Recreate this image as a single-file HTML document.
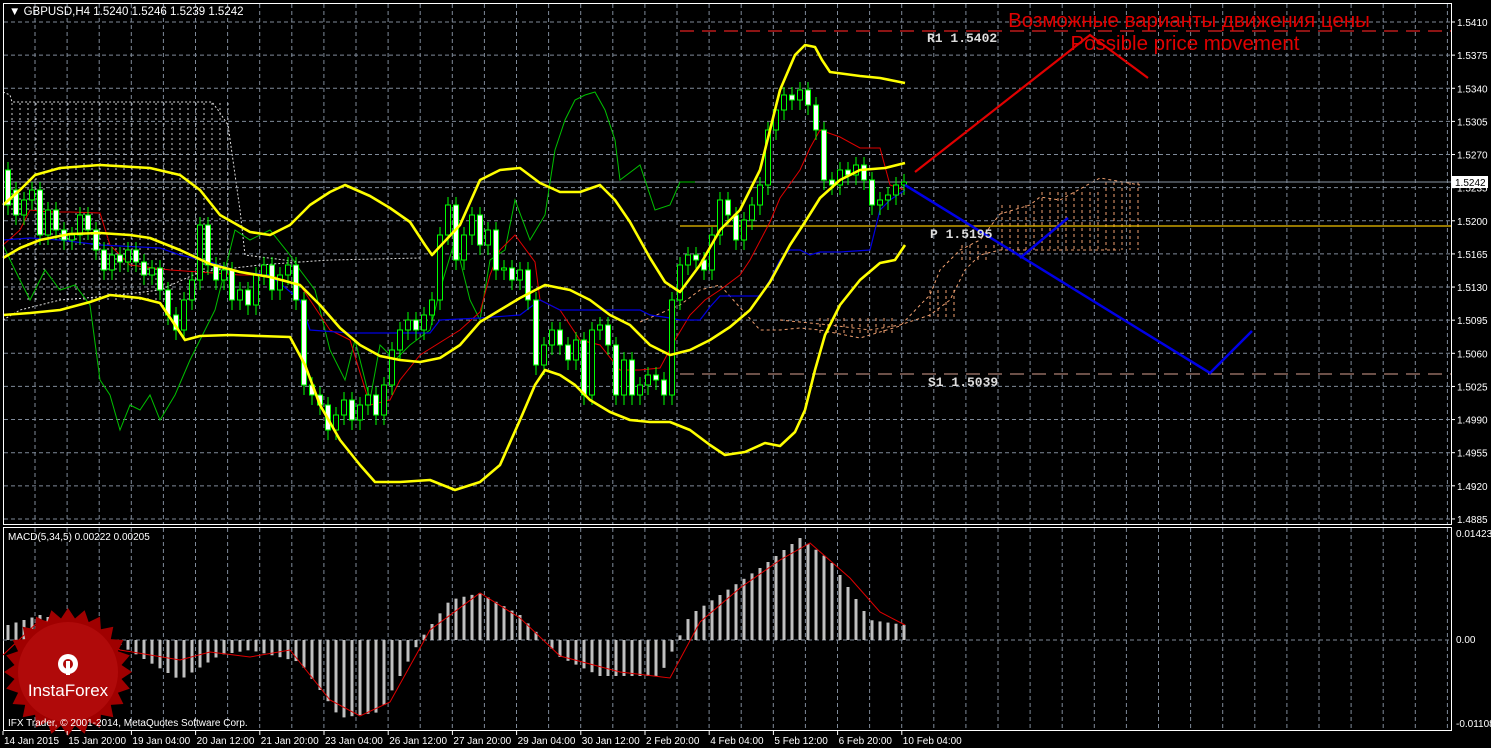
<!DOCTYPE html>
<html><head><meta charset="utf-8"><style>
html,body{margin:0;padding:0;background:#000;width:1491px;height:748px;overflow:hidden}
svg{display:block}
text{font-family:"Liberation Sans",sans-serif}
text.mono{font-family:"Liberation Mono",monospace;font-weight:bold}
</style></head><body>
<svg id="s" width="1491" height="748" xmlns="http://www.w3.org/2000/svg">
<rect width="1491" height="748" fill="#000"/>
<g id="grid" stroke="#7f8a99" stroke-dasharray="4,3" stroke-width="1"></g>
<polyline points="3,92 10,95 12,102 212,102 218,110 228,125 240,210 245,255 300,262 330,260 420,258" fill="none" stroke="#ddd" stroke-dasharray="2,2"/>
<g id="cloudv" stroke="#ccc" stroke-dasharray="2,3"></g>
<polyline points="3,320 20,310 60,300 110,296 160,290 200,272 260,265 300,262" fill="none" stroke="#ddd" stroke-dasharray="2,2"/>
<polyline points="640,322 680,305 700,290 720,285 760,330 780,330 800,328 820,330 860,338 900,326 925,300 930,295 940,270 960,250 980,240 1000,214 1030,205 1040,197 1060,200 1100,178 1140,185" fill="none" stroke="#f0a070" stroke-dasharray="3,3"/>
<polyline points="780,320 830,325 870,330 900,325 930,315 950,300 965,270 980,255 1000,250 1060,250 1120,250" fill="none" stroke="#f0a070" stroke-dasharray="3,3"/>
<g id="ocv" stroke="#f0a070" stroke-dasharray="3,3"></g>
<line x1="3" y1="182" x2="1451" y2="182" stroke="#8a96a3"/>
<line x1="680" y1="31" x2="1451" y2="31" stroke="#e02020" stroke-dasharray="14,8" stroke-width="1.3"/>
<line x1="680" y1="226" x2="1451" y2="226" stroke="#f0c000" stroke-width="1.3"/>
<line x1="680" y1="374" x2="1451" y2="374" stroke="#d8a090" stroke-dasharray="14,8"/>
<polyline points="3,245 15,270 30,300 45,270 60,290 75,285 90,305 100,380 110,395 120,430 130,405 140,410 150,395 160,420 175,395 190,360 200,340 215,310 235,230 250,240 270,230 290,255 300,270 315,290 330,350 345,380 355,340 370,400 380,345 395,360 410,345 430,330 440,290 455,240 470,300 480,320 490,260 505,250 515,200 530,240 545,215 555,150 565,120 575,100 585,95 595,92 605,110 615,140 620,180 640,165 655,210 670,205 680,182 695,182" fill="none" stroke="#00c000"/>
<polyline points="3,245 20,230 30,210 50,212 70,212 100,213 110,245 130,265 170,270 200,272 240,275 270,275 300,285 330,330 350,340 370,405 390,400 400,380 420,355 460,330 480,312 490,275 500,250 515,235 535,262 540,300 560,310 580,340 600,345 620,370 640,370 660,368 675,340 690,315 705,300 720,290 740,275 750,260 770,222 780,198 800,170 810,148 820,130 840,137 860,148 880,148 890,185 905,190" fill="none" stroke="#e00000"/>
<polyline points="3,240 30,238 60,240 100,245 160,248 180,255 210,262 240,272 270,275 300,300 310,330 350,333 430,333 440,320 480,318 520,315 540,300 560,310 600,310 640,310 650,315 670,318 680,320 700,320 710,307 720,296 760,296 770,280 780,260 790,250 800,250 810,255 820,252 840,252 870,250 880,210 890,200 905,190" fill="none" stroke="#0000e0" stroke-width="1.2"/>
<g id="candles"></g>
<g fill="none" stroke="#ffff00" stroke-width="2.6" stroke-linejoin="round">
<polyline points="3,205 20,190 35,175 60,168 100,165 150,168 180,175 200,190 220,215 250,232 270,235 290,225 310,205 330,192 345,185 370,196 390,208 410,222 425,245 432,255 460,225 480,180 500,170 520,168 540,183 560,192 580,192 600,185 615,200 630,222 650,258 665,282 680,292 700,265 720,230 740,210 760,170 770,130 780,90 795,55 805,45 815,47 822,60 830,72 860,76 880,78 905,83"/>
<polyline points="3,258 20,248 40,240 70,234 100,233 130,235 150,238 180,250 210,264 240,272 270,277 300,285 320,305 340,328 360,345 380,356 400,360 420,362 440,358 460,345 480,322 500,310 520,298 545,285 570,290 590,300 610,315 630,325 650,345 670,355 690,350 710,340 730,327 750,310 770,282 790,245 805,222 820,198 840,180 860,170 885,168 905,163"/>
<polyline points="3,315 30,313 60,310 90,302 110,295 140,298 160,303 175,325 185,340 200,336 230,335 260,336 290,337 305,365 320,405 340,440 360,465 375,482 400,482 430,480 455,490 480,482 500,465 520,420 535,385 545,370 560,375 575,385 590,400 610,412 630,420 650,422 670,422 690,430 710,445 725,455 745,452 765,443 780,446 795,432 805,410 815,370 825,335 840,305 860,280 880,263 895,260 905,245"/>
</g>
<polyline points="915,172 1090,35 1148,78" fill="none" stroke="#e00000" stroke-width="2.2"/>
<polyline points="905,185 1210,373 1252,331" fill="none" stroke="#0000e6" stroke-width="2.5"/>
<polyline points="1020,258 1068,218" fill="none" stroke="#0000e6" stroke-width="2.5"/>
<text x="1189" y="27" fill="#e00000" font-size="20.5" text-anchor="middle">Возможные варианты движения цены</text>
<text x="1185" y="50" fill="#e00000" font-size="20.5" text-anchor="middle">Possible price movement</text>
<text class="mono" x="927" y="42" font-size="13" fill="#ddd">R1 1.5402</text>
<text class="mono" x="930" y="238" font-size="13" fill="#ddd">P 1.5195</text>
<text class="mono" x="928" y="386" font-size="13" fill="#ddd">S1 1.5039</text>
<rect x="3.5" y="3.5" width="1448" height="521" fill="none" stroke="#fff"/>
<rect x="3.5" y="527.5" width="1448" height="203" fill="none" stroke="#fff"/>
<line x1="3" y1="640" x2="1451" y2="640" stroke="#7f8a99" stroke-dasharray="4,3"/>
<g id="macd" fill="#c0c0c0"></g>
<polyline id="sig" fill="none" stroke="#e00000" stroke-width="1"/>
<rect x="1452" y="176" width="36" height="12" fill="#fff"/>
<g id="axis" font-size="10" fill="#fff"></g>
<text x="9" y="15" font-size="11.5" fill="#fff">▼ GBPUSD,H4  1.5240 1.5246 1.5239 1.5242</text>
<text x="8" y="540" font-size="10" fill="#fff">MACD(5,34,5) 0.00222 0.00205</text>
<g transform="translate(68,672)">
<polygon id="star" fill="#a00000"/>
<circle r="50" fill="#b00a0a"/>
<g fill="#fff" transform="translate(0,-8)">
<circle r="10"/><circle r="5" fill="#b00a0a"/>
<rect x="-2" y="-3" width="4" height="14"/>
</g>
<text x="0" y="24" font-size="17" fill="#fff" text-anchor="middle">InstaForex</text>
</g>
<text x="8" y="726" font-size="10" fill="#fff">IFX Trader, © 2001-2014, MetaQuotes Software Corp.</text>
<g id="dates" font-size="10" fill="#fff"></g>
</svg>
<script>
(function(){
var NS="http://www.w3.org/2000/svg";
function el(p,t,a){var e=document.createElementNS(NS,t);for(var k in a)e.setAttribute(k,a[k]);p.appendChild(e);return e;}
var g=document.getElementById('grid');
for(var x=35;x<1451;x+=32.1){el(g,'line',{x1:x,y1:4,x2:x,y2:524});el(g,'line',{x1:x,y1:528,x2:x,y2:730});}
var labels=["1.5410","1.5375","1.5340","1.5305","1.5270","1.5235","1.5200","1.5165","1.5130","1.5095","1.5060","1.5025","1.4990","1.4955","1.4920","1.4885"];
var ax=document.getElementById('axis');
for(var i=0;i<16;i++){var y=22+i*33.13;el(g,'line',{x1:4,y1:y,x2:1451,y2:y});
 el(ax,'line',{x1:1451,y1:y,x2:1455,y2:y,stroke:'#fff'});
 var t=el(ax,'text',{x:1457,y:y+4});t.textContent=labels[i];}
var t=el(ax,'text',{x:1455,y:186,fill:'#000'});t.textContent="1.5242";
[["0.01423",537],["0.00",643],["-0.01108",727]].forEach(function(a){var t=el(ax,'text',{x:1456,y:a[1]});t.textContent=a[0];});
var cv=document.getElementById('cloudv');
for(var x=12;x<232;x+=8){el(cv,'line',{x1:x,y1:103,x2:x,y2:x<200?300:272});}
var oc=document.getElementById('ocv');
for(var x=930;x<1140;x+=8){var tp=x<960?290:x<1000?245:x<1040?205:x<1100?192:182;var bt=x<960?320:x<990?260:250;el(oc,'line',{x1:x,y1:tp,x2:x,y2:bt});}
for(var x=820;x<900;x+=8){el(oc,'line',{x1:x,y1:318,x2:x,y2:336});}
var P=[[8,170,205],[16,190,215],[24,215,200],[32,200,190],[40,190,235],[48,235,210],[56,210,230],[64,230,240],[72,240,235],[80,235,215],[88,215,230],[96,230,250],[104,250,270],[112,270,255],[120,255,262],[128,262,250],[136,250,262],[144,262,275],[152,275,268],[160,268,290],[168,290,315],[176,315,330],[184,330,300],[192,300,280],[200,280,225],[208,225,265],[216,265,280],[224,280,270],[232,270,300],[240,300,290],[248,290,305],[256,305,275],[264,275,265],[272,265,290],[280,290,275],[288,275,265],[296,265,300],[304,300,385],[312,385,395],[320,395,405],[328,405,430],[336,430,415],[344,415,400],[352,400,420],[360,420,405],[368,405,395],[376,395,415],[384,415,385],[392,385,350],[400,350,330],[408,330,320],[416,320,330],[424,330,315],[432,315,300],[440,300,235],[448,235,205],[456,205,260],[464,260,235],[472,235,215],[480,215,245],[488,245,230],[496,230,270],[504,270,268],[512,268,280],[520,280,270],[528,270,300],[536,300,365],[544,365,345],[552,345,330],[560,330,345],[568,345,360],[576,360,340],[584,340,395],[592,395,330],[600,330,325],[608,325,345],[616,345,395],[624,395,360],[632,360,395],[640,395,385],[648,385,375],[656,375,380],[664,380,395],[672,395,300],[680,300,265],[688,265,255],[696,255,260],[704,260,270],[712,270,235],[720,235,200],[728,200,215],[736,215,240],[744,240,220],[752,220,205],[760,205,185],[768,185,130],[776,130,110],[784,110,95],[792,95,100],[800,100,90],[808,90,105],[816,105,130],[824,130,180],[832,180,185],[840,185,170],[848,170,175],[856,175,165],[864,165,180],[872,180,205],[880,205,200],[888,200,195],[896,195,185],[904,185,182]];
var cg=document.getElementById('candles');
P.forEach(function(c){var o=c[1],cl=c[2],hi=Math.min(o,cl)-8,lo=Math.max(o,cl)+10;
 el(cg,'line',{x1:c[0],y1:hi,x2:c[0],y2:lo,stroke:'#00ff00'});
 el(cg,'rect',{x:c[0]-2.5,y:Math.min(o,cl),width:5,height:Math.max(1,Math.abs(o-cl)),fill:cl>o?'#fff':'#000',stroke:'#00ff00'});});
function interp(pts,x){for(var i=0;i<pts.length-1;i++){if(x>=pts[i][0]&&x<=pts[i+1][0]){var f=(x-pts[i][0])/(pts[i+1][0]-pts[i][0]);return pts[i][1]+f*(pts[i+1][1]-pts[i][1]);}}return pts[pts.length-1][1];}
var M=[[8,625],[40,615],[80,625],[120,645],[180,680],[220,655],[250,650],[300,662],[340,718],[380,712],[420,640],[450,600],[480,593],[520,615],[560,657],[600,676],[660,676],[690,615],[720,595],[760,568],[800,538],[830,560],[870,620],[905,625]];
var mg=document.getElementById('macd');
for(var x=8;x<=905;x+=8){var y=interp(M,x);el(mg,'rect',{x:x-1.5,y:Math.min(y,640),width:3,height:Math.abs(y-640)});}
var S=[[3,655],[40,620],[80,630],[120,650],[180,660],[210,652],[250,657],[290,650],[330,700],[360,716],[390,702],[430,630],[480,593],[520,618],[560,656],[620,672],[670,678],[700,622],[740,588],[780,560],[810,543],[850,578],[880,612],[905,625]];
document.getElementById('sig').setAttribute('points',S.map(function(p){return p.join(',')}).join(' '));
var st=[];for(var i=0;i<48;i++){var r=i%2?54:64,a=i*Math.PI/24;st.push((r*Math.cos(a)).toFixed(1)+','+(r*Math.sin(a)).toFixed(1));}
document.getElementById('star').setAttribute('points',st.join(' '));
var D=["14 Jan 2015","15 Jan 20:00","19 Jan 04:00","20 Jan 12:00","21 Jan 20:00","23 Jan 04:00","26 Jan 12:00","27 Jan 20:00","29 Jan 04:00","30 Jan 12:00","2 Feb 20:00","4 Feb 04:00","5 Feb 12:00","6 Feb 20:00","10 Feb 04:00"];
var dg=document.getElementById('dates');
D.forEach(function(d,i){var x=3+i*64.2;el(dg,'line',{x1:x,y1:731,x2:x,y2:735,stroke:'#fff'});var t=el(dg,'text',{x:x+1,y:744});t.textContent=d;});
})();
</script>
</body></html>
